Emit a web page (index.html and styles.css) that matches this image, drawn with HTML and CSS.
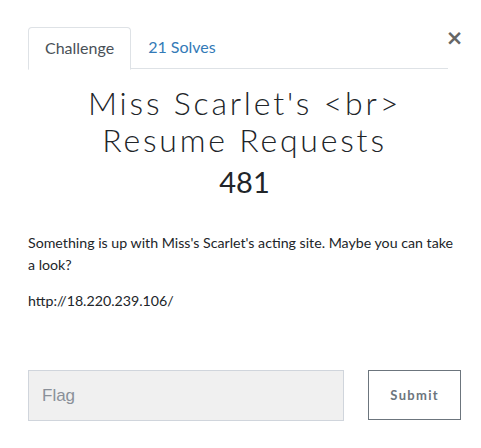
FILE: index.html
```html
<!DOCTYPE html>
<html>
<head>
<meta charset="utf-8">
<link rel="stylesheet" href="styles.css">
</head>
<body>
<div class="modal">
  <div class="head">
    <ul class="tabs">
      <li class="tab active">Challenge</li>
      <li class="tab link">21 Solves</li>
    </ul>
    <span class="close">&times;</span>
  </div>
  <h2 class="title">Miss Scarlet's &lt;br&gt;<br>Resume Requests</h2>
  <h3 class="value">481</h3>
  <p class="desc">Something is up with Miss's Scarlet's acting site. Maybe you can take a look?</p>
  <p class="desc">http://18.220.239.106/</p>
  <form class="submit-row">
    <input class="flag" type="text" placeholder="Flag">
    <button class="btn" type="button">Submit</button>
  </form>
</div>
</body>
</html>
```
FILE: styles.css
```css
html, body { margin: 0; padding: 0; background: #fff; }
body { font-family: Lato, "Noto Sans", sans-serif; color: #212529; }
.modal { padding: 27px 20px 0 28px; }
.head { display: flex; align-items: flex-start; }
.tabs {
  list-style: none; margin: 0; padding: 0; flex: 1;
  display: flex; border-bottom: 1px solid #dee2e6; height: 41px;
}
.tab { font-size: 16px; line-height: 20px; padding: 10px 16px 11px 16px; }
.tab.active {
  color: #495057; border: 1px solid #dee2e6; border-bottom-color: #fff;
  border-radius: 4px 4px 0 0; height: 20px; margin-bottom: -1px; background: #fff;
}
.tab.link { color: #337ab7; padding-left: 17px; }
.close {
  width: 13px; margin: 1px 0 0 0; display: flex; justify-content: center;
  font-family: "DejaVu Sans", sans-serif; font-weight: bold; font-size: 21px;
  color: #666; line-height: 20px;
}
.title {
  margin: 15px 0 0; text-align: center; font-family: Lato, sans-serif;
  font-weight: 300; font-size: 32px; line-height: 37px; letter-spacing: 2.8px; color: #212529;
}
.value {
  margin: 6px 0 0; text-align: center; font-weight: 400; font-size: 29px; line-height: 36px;
}
.desc { margin: 0 0 14px; font-size: 14.2px; line-height: 22px; }
.desc:first-of-type { margin-top: 32px; }
.submit-row { display: flex; margin-top: 58px; gap: 24px; }
.flag {
  width: 317px; height: 51px; box-sizing: border-box; border: 1px solid #d0d5dc;
  background: #f0f0f0; padding: 0 13px; font-family: "Liberation Sans", Arial, sans-serif;
  font-size: 17px; outline: none; margin: 0;
}
.flag::placeholder { color: #8a9099; }
.btn {
  width: 93px; height: 50px; box-sizing: border-box; border: 1px solid #6c757d;
  background: #fff; color: #6c757d; font-family: Lato, sans-serif; font-weight: 700;
  font-size: 13px; letter-spacing: 1.3px; margin: 0; padding: 0;
}
```
